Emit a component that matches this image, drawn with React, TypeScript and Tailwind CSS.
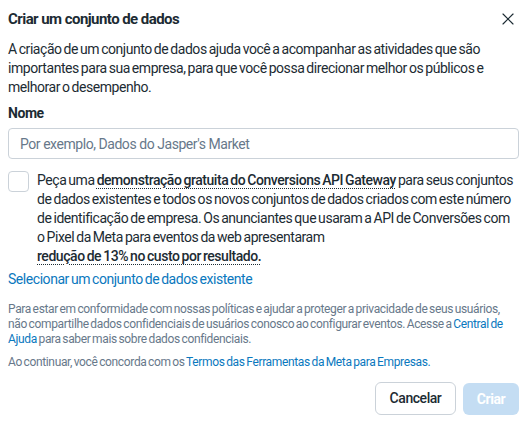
import { X } from "lucide-react"

export default function App() {
  return (
    <div
      className="w-[526px] h-[422px] bg-white text-[#1c2b33] pl-2 pr-[7px] pt-[8px] flex flex-col tracking-[-0.45px] [word-spacing:-1px]"
      style={{ fontFamily: "Roboto, 'Liberation Sans', sans-serif" }}
    >
      <div className="flex items-center justify-between h-[22px]">
        <h1 className="text-[15px] font-bold leading-[22px] tracking-[-0.55px] [word-spacing:0px]">Criar um conjunto de dados</h1>
        <button className="text-[#1c2b33] mr-[1px]">
          <X size={20} strokeWidth={1.4} />
        </button>
      </div>

      <p className="mt-[10px] text-[14px] leading-[19px]">
        A criação de um conjunto de dados ajuda você a acompanhar as atividades que são importantes para sua empresa, para que você possa direcionar melhor os públicos e melhorar o desempenho.
      </p>

      <label className="mt-[7px] text-[14px] font-bold leading-[19px]">Nome</label>
      <input
        type="text"
        placeholder="Por exemplo, Dados do Jasper's Market"
        className="mt-[5px] h-[31px] w-full border border-[#cbd2d9] rounded-[4px] px-[11px] text-[14px] placeholder-[#67788a] focus:outline-none"
      />

      <div className="mt-[12px] flex gap-[8px]">
        <div className="w-[21px] h-[21px] border border-[#cbd2d9] rounded-[4px] shrink-0" />
        <p className="text-[14px] leading-[19px]">
          Peça uma{" "}
          <span className="font-medium underline decoration-dotted decoration-1 underline-offset-[3px]">demonstração gratuita do Conversions API Gateway</span>{" "}
          para seus conjuntos de dados existentes e todos os novos conjuntos de dados criados com este número de identificação de empresa. Os anunciantes que usaram a API de Conversões com o Pixel da Meta para eventos da web apresentaram
          <br />
          <span className="font-medium underline decoration-dotted decoration-1 underline-offset-[3px]">redução de 13% no custo por resultado.</span>
        </p>
      </div>

      <a className="mt-[4px] text-[14px] leading-[19px] text-[#0a78be]">Selecionar um conjunto de dados existente</a>

      <p className="mt-[13px] text-[12px] leading-[15px] text-[#67788a] tracking-[-0.35px]">
        Para estar em conformidade com nossas políticas e ajudar a proteger a privacidade de seus usuários, não compartilhe dados confidenciais de usuários conosco ao configurar eventos. Acesse a{" "}
        <a className="text-[#0a78be]">Central de Ajuda</a> para saber mais sobre dados confidenciais.
      </p>

      <p className="mt-[8px] text-[12px] leading-[15px] text-[#67788a] tracking-[-0.35px]">
        Ao continuar, você concorda com os <a className="text-[#0a78be]">Termos das Ferramentas da Meta para Empresas.</a>
      </p>

      <div className="mt-[12px] flex justify-end items-start gap-[7px]">
        <button className="h-[33px] w-[81px] border border-[#cbd2d9] rounded-[6px] text-[14px] font-medium">Cancelar</button>
        <button className="mt-[1px] h-[32px] w-[56px] rounded-[6px] bg-[#c4ddf3] text-white text-[14px] font-bold">Criar</button>
      </div>
    </div>
  )
}
